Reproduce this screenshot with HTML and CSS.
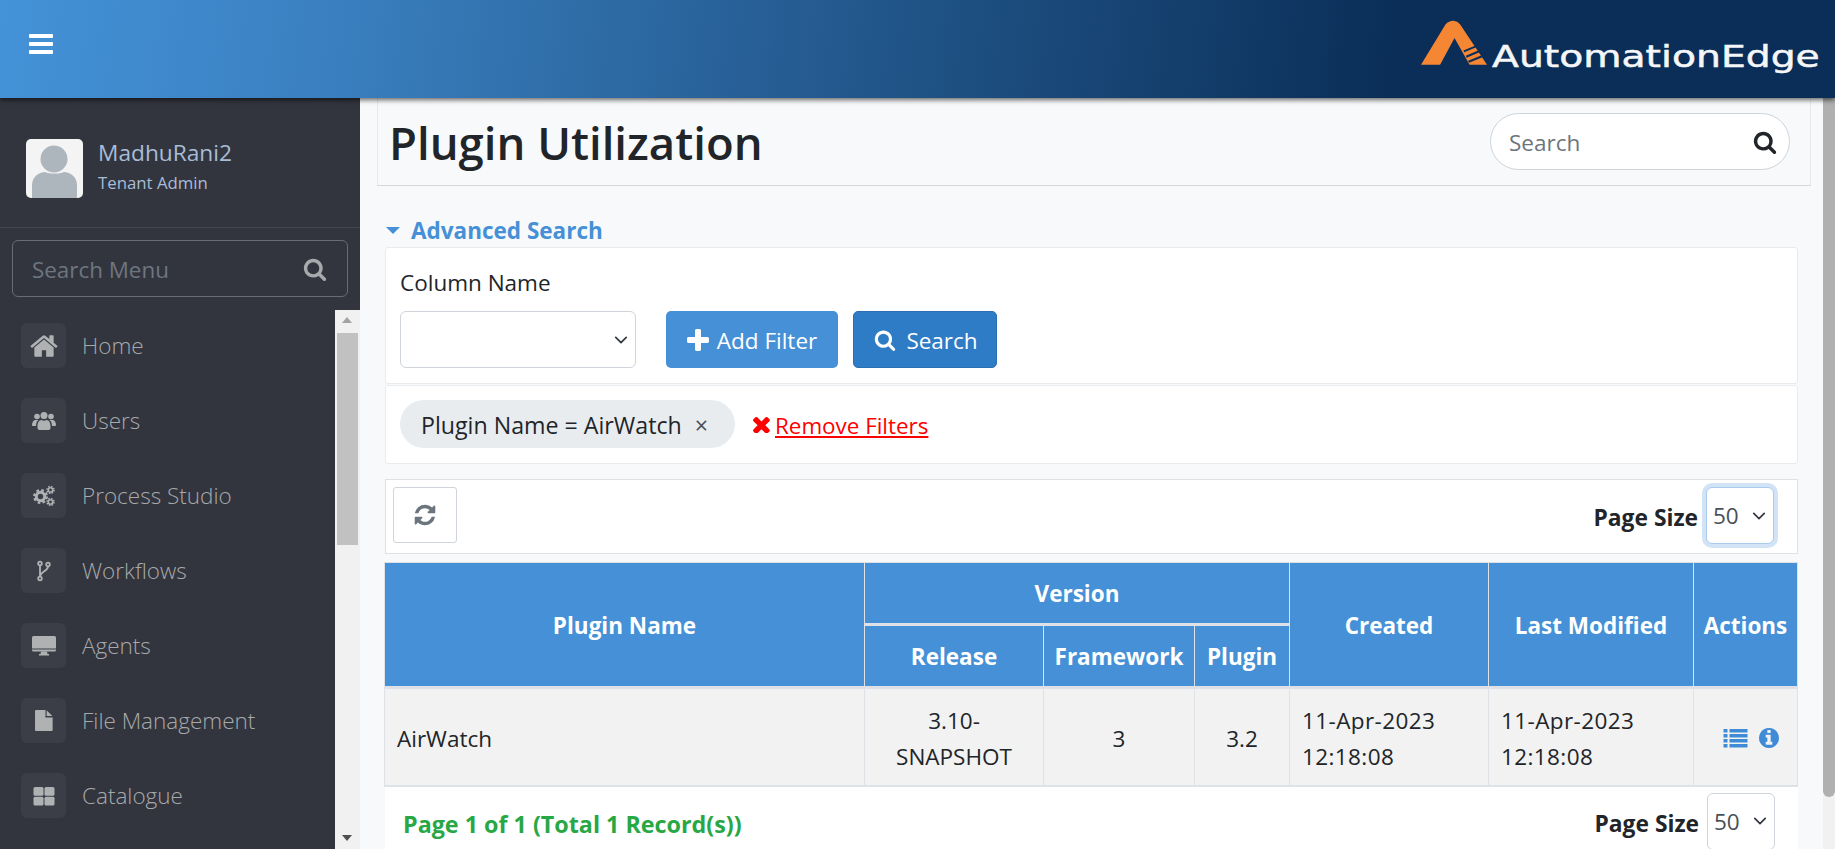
FILE: index.html
```html
<!DOCTYPE html>
<html lang="en">
<head>
<meta charset="utf-8">
<title>Plugin Utilization</title>
<link rel="stylesheet" href="styles.css">
</head>
<body>
<svg class="defs" aria-hidden="true">
  <symbol id="i-search" viewBox="0 0 1792 1792"><path d="M1216 832q0-185-131.500-316.500t-316.500-131.500-316.500 131.500-131.500 316.500 131.500 316.500 316.500 131.500 316.500-131.500 131.500-316.500zm512 832q0 52-38 90t-90 38q-54 0-90-38l-343-342q-179 124-399 124-143 0-273.500-55.500t-225-150-150-225-55.500-273.500 55.500-273.500 150-225 225-150 273.500-55.500 273.500 55.500 225 150 150 225 55.500 273.500q0 220-124 399l343 343q37 37 37 90z"/></symbol>
  <symbol id="i-chev" viewBox="0 0 16 16"><path d="M2 5l6 6 6-6" fill="none" stroke="currentColor" stroke-width="2" stroke-linecap="round" stroke-linejoin="round"/></symbol>
</svg>
<header class="topbar">
  <svg class="burger" viewBox="0 0 1536 1536"><path d="M1536 1152v128q0 26-19 45t-45 19H64q-26 0-45-19t-19-45v-128q0-26 19-45t45-19h1408q26 0 45 19t19 45zm0-512v128q0 26-19 45t-45 19H64q-26 0-45-19t-19-45V640q0-26 19-45t45-19h1408q26 0 45 19t19 45zm0-512v128q0 26-19 45t-45 19H64q-26 0-45-19T0 256V128q0-26 19-45t45-19h1408q26 0 45 19t19 45z"/></svg>
  <div class="logo">
    <svg class="logo-mark" viewBox="15 25 197 133">
      <path fill="#f58634" d="M15 158 L88 38 Q100 25 115 27 Q125 28 132 38 L212 158 H160 L115 78 L72 158 Z"/>
      <path d="M143 118 L184 101 M150 134 L192 116 M157 149 L201 131" stroke="#0a2e57" stroke-width="6" fill="none"/>
    </svg>
    <span class="logo-text">AutomationEdge</span>
  </div>
</header>
<div class="shell">
  <aside class="sidebar">
    <div class="user">
      <svg class="avatar" viewBox="0 0 57 59"><rect width="57" height="59" rx="5" fill="#f4f4f4"/><circle cx="28" cy="20" r="13.500" fill="#aeb6bd"/><path d="M6 59V46c0-8 7-13 13-13 5 2 14 2 19 0 6 0 13 5 13 13v13z" fill="#aeb6bd"/></svg>
      <div class="user-text">
        <div class="user-name">MadhuRani2</div>
        <div class="user-role">Tenant Admin</div>
      </div>
    </div>
    <div class="menu-search">
      <span class="ph">Search Menu</span>
      <svg class="ms-icon"><use href="#i-search"/></svg>
    </div>
    <div class="menu-wrap">
      <nav class="menu">
        <a class="menu-item"><span class="mi"><svg class="ic-home" viewBox="0 0 1792 1792"><path d="M1472 992v480q0 26-19 45t-45 19h-384v-384h-256v384h-384q-26 0-45-19t-19-45v-480q0-1 .5-3t.5-3l575-474 575 474q1 2 1 6zm223-69l-62 74q-8 9-21 11h-3q-13 0-21-7l-692-577-692 577q-12 8-24 7-13-2-21-11l-62-74q-8-10-7-23.500t11-21.500l719-599q32-26 76-26t76 26l244 204v-195q0-14 9-23t23-9h192q14 0 23 9t9 23v408l219 182q10 8 11 21.500t-7 23.500z"/></svg></span>Home</a>
        <a class="menu-item"><span class="mi"><svg viewBox="0 0 24 24"><circle cx="5" cy="7.500" r="2.800"/><circle cx="19" cy="7.500" r="2.800"/><circle cx="12" cy="6.500" r="3.500"/><path d="M0 16c0-3 1.500-5 3.500-5h3c-1.500 1-2.500 3-2.500 6H1c-.6 0-1-.4-1-1zM24 16c0-3-1.500-5-3.500-5h-3c1.500 1 2.500 3 2.500 6h3c.6 0 1-.4 1-1zM5.500 17c0-3 1.500-6 4-6 1.500 1 3.500 1 5 0 2.500 0 4 3 4 6v2c0 1-1 2-2 2h-9c-1 0-2-1-2-2z"/></svg></span>Users</a>
        <a class="menu-item"><span class="mi"><svg viewBox="0 0 24 24"><g fill="none" stroke="currentColor"><circle cx="8.500" cy="12.500" r="4.200" stroke-width="3"/><circle cx="8.500" cy="12.500" r="6.200" stroke-width="2.500" stroke-dasharray="2.600 2.270"/><circle cx="18.500" cy="6" r="2.200" stroke-width="1.600"/><circle cx="18.500" cy="6" r="3.500" stroke-width="1.500" stroke-dasharray="1.500 1.250"/><circle cx="18.500" cy="18" r="2.200" stroke-width="1.600"/><circle cx="18.500" cy="18" r="3.500" stroke-width="1.500" stroke-dasharray="1.500 1.250"/></g></svg></span>Process Studio</a>
        <a class="menu-item"><span class="mi"><svg viewBox="0 0 24 24"><g fill="none" stroke="currentColor" stroke-width="1.800"><circle cx="8" cy="4.500" r="1.800"/><circle cx="8" cy="19.500" r="1.800"/><circle cx="16" cy="5.500" r="1.800"/><path d="M8 6.500v11M16 7.500c0 5-7.500 4.500-8 10"/></g></svg></span>Workflows</a>
        <a class="menu-item"><span class="mi"><svg viewBox="0 0 24 24"><rect x="0" y="2" width="24" height="15.500" rx="1.500"/><path d="M0 15h24" stroke="#3b3e47" stroke-width="1"/><path d="M9 17.500h6l.5 2.500h1.500v1.500H7V20h1.500z"/></svg></span>Agents</a>
        <a class="menu-item"><span class="mi"><svg class="ic-file" viewBox="0 0 1792 1792"><path d="M1024 512V40q22 14 36 28l408 408q14 14 28 36h-472zm-128 32q0 40 28 68t68 28h544v1056q0 40-28 68t-68 28H128q-40 0-68-28t-28-68V96q0-40 28-68t68-28h800v544z" transform="translate(140 0)"/></svg></span>File Management</a>
        <a class="menu-item"><span class="mi"><svg viewBox="0 0 24 24"><rect x="1.500" y="3" width="10" height="8.800" rx="1.500"/><rect x="12.500" y="3" width="10" height="8.800" rx="1.500"/><rect x="1.500" y="12.700" width="10" height="8.800" rx="1.500"/><rect x="12.500" y="12.700" width="10" height="8.800" rx="1.500"/></svg></span>Catalogue</a>
      </nav>
      <div class="sb sb-side">
        <span class="arrow up"></span>
        <span class="thumb"></span>
        <span class="arrow down"></span>
      </div>
    </div>
  </aside>
  <main class="main">
    <div class="title-card">
      <h1>Plugin Utilization</h1>
      <div class="pill-search">
        <span class="ph">Search</span>
        <svg><use href="#i-search"/></svg>
      </div>
    </div>
    <div class="adv"><span class="caret"></span>Advanced Search</div>
    <section class="panel p-filter">
      <label class="field-label">Column Name</label>
      <div class="filter-row">
        <div class="select col-select"><svg class="chev"><use href="#i-chev"/></svg></div>
        <button class="btn btn-light-blue"><svg viewBox="0 0 1408 1408"><path d="M1408 608v192q0 40-28 68t-68 28H896v416q0 40-28 68t-68 28H608q-40 0-68-28t-28-68V896H96q-40 0-68-28T0 800V608q0-40 28-68t68-28h416V96q0-40 28-68t68-28h192q40 0 68 28t28 68v416h416q40 0 68 28t28 68z"/></svg>Add Filter</button>
        <button class="btn btn-blue"><svg><use href="#i-search"/></svg>Search</button>
      </div>
    </section>
    <section class="panel p-chips">
      <span class="chip">Plugin Name = AirWatch <span class="chip-x">×</span></span>
      <svg class="rm-x" viewBox="300 300 1200 1200"><path d="M1490 1322q0 40-28 68l-136 136q-28 28-68 28t-68-28l-294-294-294 294q-28 28-68 28t-68-28l-136-136q-28-28-28-68t28-68l294-294-294-294q-28-28-28-68t28-68l136-136q28-28 68-28t68 28l294 294 294-294q28-28 68-28t68 28l136 136q28 28 28 68t-28 68l-294 294 294 294q28 28 28 68z"/></svg>
      <a class="rm-link">Remove Filters</a>
    </section>
    <section class="panel p-tools">
      <button class="refresh"><svg viewBox="0 0 1792 1792"><path d="M1639 1056q0 5-1 7-64 268-268 434.500t-478 166.500q-146 0-282.500-55t-243.500-157l-129 129q-19 19-45 19t-45-19-19-45v-448q0-26 19-45t45-19h448q26 0 45 19t19 45-19 45l-137 137q71 66 161 102t187 36q134 0 250-65t186-179q11-17 53-117 8-23 30-23h192q13 0 22.500 9.500t9.500 22.500zm25-800v448q0 26-19 45t-45 19h-448q-26 0-45-19t-19-45 19-45l138-138q-148-137-349-137-134 0-250 65t-186 179q-11 17-53 117-8 23-30 23h-199q-13 0-22.500-9.500t-9.500-22.500v-7q65-268 270-434.500t480-166.500q146 0 284 55.500t245 156.500l130-129q19-19 45-19t45 19 19 45z"/></svg></button>
      <div class="page-size"><b>Page Size</b><div class="select size-select focus">50<svg class="chev"><use href="#i-chev"/></svg></div></div>
    </section>
    <table class="grid">
      <colgroup><col class="c1"><col class="c2"><col class="c3"><col class="c4"><col class="c5"><col class="c6"><col class="c7"></colgroup>
      <thead>
        <tr class="hr1"><th rowspan="2">Plugin Name</th><th colspan="3">Version</th><th rowspan="2">Created</th><th rowspan="2">Last Modified</th><th rowspan="2">Actions</th></tr>
        <tr class="hr2"><th>Release</th><th>Framework</th><th>Plugin</th></tr>
      </thead>
      <tbody>
        <tr>
          <td class="left">AirWatch</td><td>3.10-<br>SNAPSHOT</td><td>3</td><td>3.2</td>
          <td class="left dt">11-Apr-2023<br>12:18:08</td><td class="left dt">11-Apr-2023<br>12:18:08</td>
          <td class="acts">
            <svg class="a-list" viewBox="0 0 24 20"><path d="M0 1h4v3.500H0zM6 1h18v3.500H6zM0 6h4v3.500H0zM6 6h18v3.500H6zM0 11h4v3.500H0zM6 11h18v3.500H6zM0 16h4v3.500H0zM6 16h18v3.500H6z"/></svg>
            <svg class="a-info" viewBox="0 0 1536 1536"><path transform="translate(-128 -128)" d="M1152 1376v-160q0-14-9-23t-23-9h-96V672q0-14-9-23t-23-9H672q-14 0-23 9t-9 23v160q0 14 9 23t23 9h96v320h-96q-14 0-23 9t-9 23v160q0 14 9 23t23 9h448q14 0 23-9t9-23zm-128-896V320q0-14-9-23t-23-9H800q-14 0-23 9t-9 23v160q0 14 9 23t23 9h192q14 0 23-9t9-23zm640 416q0 209-103 385.500T1281.500 1561 896 1664t-385.500-103T231 1281.500 128 896t103-385.500T510.500 231 896 128t385.500 103T1561 510.500 1664 896z"/></svg>
          </td>
        </tr>
      </tbody>
    </table>
    <section class="panel p-foot">
      <span class="records">Page 1 of 1 (Total 1 Record(s))</span>
      <div class="page-size"><b>Page Size</b><div class="select size-select">50<svg class="chev"><use href="#i-chev"/></svg></div></div>
    </section>
  </main>
  <div class="sb sb-main"><span class="thumb"></span></div>
</div>
</body>
</html>
```

FILE: styles.css
```css
* { box-sizing: border-box; }
html, body { margin: 0; height: 100%; overflow: hidden; }
body {
  display: flex; flex-direction: column;
  font-family: "Open Sans", "Noto Sans", sans-serif;
  font-size: 22.500px; color: #212529; background: #f8f9fa;
}
.defs { display: none; }
.ph { padding-top: 2px; }
.topbar {
  height: 98px; flex: none; display: flex; align-items: center; justify-content: space-between;
  padding: 0 16px 0 29px;
  background: linear-gradient(97deg, #4492d8 0%, #3a80c0 18%, #0a2e57 76%, #0a2e57 100%);
  box-shadow: 0 2px 5px rgba(0,0,0,.6);
  position: relative; z-index: 2;
}
.burger { width: 24px; height: 24px; fill: #fff; margin-top: -8px; }
.logo { display: flex; align-items: flex-end; margin-top: -13px; overflow: visible; }
.logo-mark { width: 66px; height: 45px; flex: none; }
.logo-text {
  display: block; font-family: "DejaVu Sans", sans-serif; font-size: 30px; line-height: 30px;
  color: #f4f6f9; -webkit-text-stroke: .5px #f4f6f9; transform: scaleX(1.310); transform-origin: left center;
  width: 250px; margin: 0 77px -7px 5px; white-space: nowrap;
}
.shell { flex: 1; min-height: 0; display: flex; }
.sidebar { width: 360px; flex: none; background: #32353e; display: flex; flex-direction: column; }
.user {
  height: 130px; flex: none; display: flex; align-items: center; padding: 11px 0 0 26px; gap: 15px;
  border-bottom: 1px solid #44474f;
}
.avatar { width: 57px; height: 59px; flex: none; }
.user-name { font-size: 22.700px; line-height: 31px; color: #a9bcd8; margin-top: -4px; }
.user-role { font-size: 16.800px; line-height: 26px; color: #a9bcd8; padding-top: 2px; }
.menu-search {
  margin: 12px 12px 13px; height: 57px; flex: none; border: 1px solid #6a6c73; border-radius: 6px;
  display: flex; align-items: center; justify-content: space-between; padding: 0 20px 0 19px;
  color: #6d7680; font-size: 22.400px;
}
.ms-icon { width: 24px; height: 24px; fill: #a7a9ac; }
.menu-wrap { flex: 1; min-height: 0; display: flex; }
.menu { flex: 1; padding: 13px 0 0 21px; overflow: hidden; }
.menu-item {
  height: 45px; margin-bottom: 30px; display: flex; align-items: center; gap: 16px;
  color: #a8a9ab; font-size: 22.500px; font-weight: 300;
}
.mi {
  width: 45px; height: 45px; flex: none; border-radius: 6px; background: #3b3e47;
  display: flex; align-items: center; justify-content: center; color: #b0b1b3;
}
.mi svg { width: 24px; height: 24px; fill: currentColor; }
.mi .ic-home { width: 30px; height: 30px; }
.mi .ic-file { width: 21px; height: 21px; }
.sb { flex: none; background: #f1f1f1; display: flex; flex-direction: column; align-items: center; }
.sb-side { width: 25px; position: relative; padding: 23px 2px 0; }
.sb-side .thumb { width: 21px; height: 212px; background: #c1c1c1; }
.arrow { position: absolute; left: 7px; width: 0; height: 0; border-left: 5.500px solid transparent; border-right: 5.500px solid transparent; }
.arrow.up { top: 7px; border-bottom: 6px solid #a3a3a3; }
.arrow.down { bottom: 8px; border-top: 6px solid #505050; }
.sb-main { width: 12px; }
.sb-main .thumb { width: 12px; height: 699px; background: #b0b0b0; border-radius: 0 0 6px 6px; }
.main { flex: 1; min-width: 0; padding: 0 25px; overflow: hidden; }
.title-card {
  height: 88px; margin: 0 -13px 0 -8px; padding: 0 20px 0 11px; display: flex; align-items: center; justify-content: space-between;
  border: 1px solid #e6e8ea; border-top: 0; border-bottom: 1px solid #d5d8db;
}
h1 { margin: 3px 0 0; font-size: 45.500px; font-weight: 600; color: #212529; line-height: 1; }
.pill-search {
  width: 300px; height: 57px; border: 1px solid #ced4da; border-radius: 29px; background: #fff;
  display: flex; align-items: center; justify-content: space-between; padding: 0 12px 0 18px; color: #6c757d;
}
.pill-search svg { width: 24px; height: 24px; fill: #212529; }
.adv { height: 31px; margin-top: 29px; margin-bottom: 1px; display: flex; align-items: center; color: #4590d6; font-size: 22.500px; font-weight: 700; }
.caret { width: 0; height: 0; border-left: 7px solid transparent; border-right: 7px solid transparent; border-top: 7px solid #4590d6; margin: 0 11px 0 1px; }
.panel { background: #fff; border: 1px solid #e9ecef; border-radius: 3px; }
.p-filter { height: 137px; padding: 21px 14px 0; }
.field-label { display: block; line-height: 28px; height: 42px; color: #212529; font-size: 22.500px; }
.filter-row { display: flex; align-items: flex-start; }
.select {
  border: 1px solid #ced4da; border-radius: 6px; background: #fff; display: flex; align-items: center; justify-content: space-between; color: #495057;
}
.col-select { width: 236px; height: 57px; padding: 0 6px 0 0; justify-content: flex-end; margin-right: 30px; }
.chev { width: 14px; height: 14px; color: #343a40; margin-right: 0; }
.col-select .chev { margin-right: 1px; }
.btn {
  height: 57px; border: 0; border-radius: 5px; color: #fff; font: inherit; display: flex; align-items: center; justify-content: center; gap: 8px; padding: 2px 0 0;
}
.btn svg { width: 22px; height: 22px; fill: #fff; margin-top: -2px; }
.btn-light-blue { width: 172px; background: #4590d6; margin-right: 15px; }
.btn-blue { width: 144px; background: #2e7bc6; border: 1px solid #2a6fb3; gap: 10px; padding-left: 2px; }
.p-chips { height: 79px; margin-top: 1px; padding: 14px 0 0 14px; display: flex; align-items: flex-start; }
.chip { height: 48px; width: 335px; border-radius: 24px; background: #e9ecef; display: flex; align-items: center; padding: 2px 0 0 21px; white-space: pre; font-size: 23.200px; }
.chip-x { color: #495057; margin-left: 7px; }
.rm-x { width: 17px; height: 17px; fill: #f00; margin: 16px 5px 0 18px; flex: none; }
.rm-link { color: #f00; text-decoration: underline; line-height: 52px; font-size: 22.400px; }
.p-tools { height: 75px; margin-top: 15px; padding: 7px 23px 0 7px; display: flex; justify-content: space-between; align-items: flex-start; border-color: #dee2e6; border-radius: 0; }
.refresh { width: 64px; height: 56px; background: #fff; border: 1px solid #ced4da; border-radius: 3px; display: flex; align-items: center; justify-content: center; padding: 0; }
.refresh svg { width: 24px; height: 24px; fill: #6c757d; }
.page-size { display: flex; align-items: center; gap: 8px; }
.page-size b { font-weight: 700; color: #212529; font-size: 22.800px; margin-top: 4px; }
.size-select { width: 68px; height: 57px; padding: 0 7px 0 6px; border-radius: 6px; }
.focus { border-color: #a8cbee; box-shadow: 0 0 0 4px #d2e3f5; }
.grid { width: 1413px; margin: 8px 0 0 -1px; border-collapse: collapse; table-layout: fixed; }
.c1 { width: 480px; } .c2 { width: 179px; } .c3 { width: 151px; } .c4 { width: 95px; } .c5 { width: 199px; } .c6 { width: 205px; } .c7 { width: 104px; }
.grid th { background: #4590d6; color: #fff; font-weight: 700; font-size: 22.500px; text-align: center; padding: 1px 2px 0; border: 1px solid #dee2e6; white-space: nowrap; }
.grid thead { border-bottom: 3px solid #dee2e6; }
.hr1 { height: 62px; }
.hr2 { height: 63px; }
.hr1 th[colspan] { border-bottom-width: 3px; }
.grid td { background: #f2f2f2; height: 98px; padding: 4px 2px 0; text-align: center; line-height: 36px; border: 1px solid #dee2e6; border-bottom-width: 2px; }
.grid td.left { text-align: left; padding-left: 12px; }
.grid td.dt { letter-spacing: .4px; }
.grid td.acts { padding: 7px 0 0 11px; white-space: nowrap; }
.a-list { width: 25px; height: 20px; fill: #3f8bd6; margin-right: 6px; }
.a-info { width: 20px; height: 20px; fill: #3f8bd6; }
.p-foot { height: 80px; padding: 6px 23px 0 18px; display: flex; justify-content: space-between; align-items: flex-start; border: 0; border-radius: 0; }
.records { color: #28a745; font-weight: 700; line-height: 62px; font-size: 23.300px; }
```
